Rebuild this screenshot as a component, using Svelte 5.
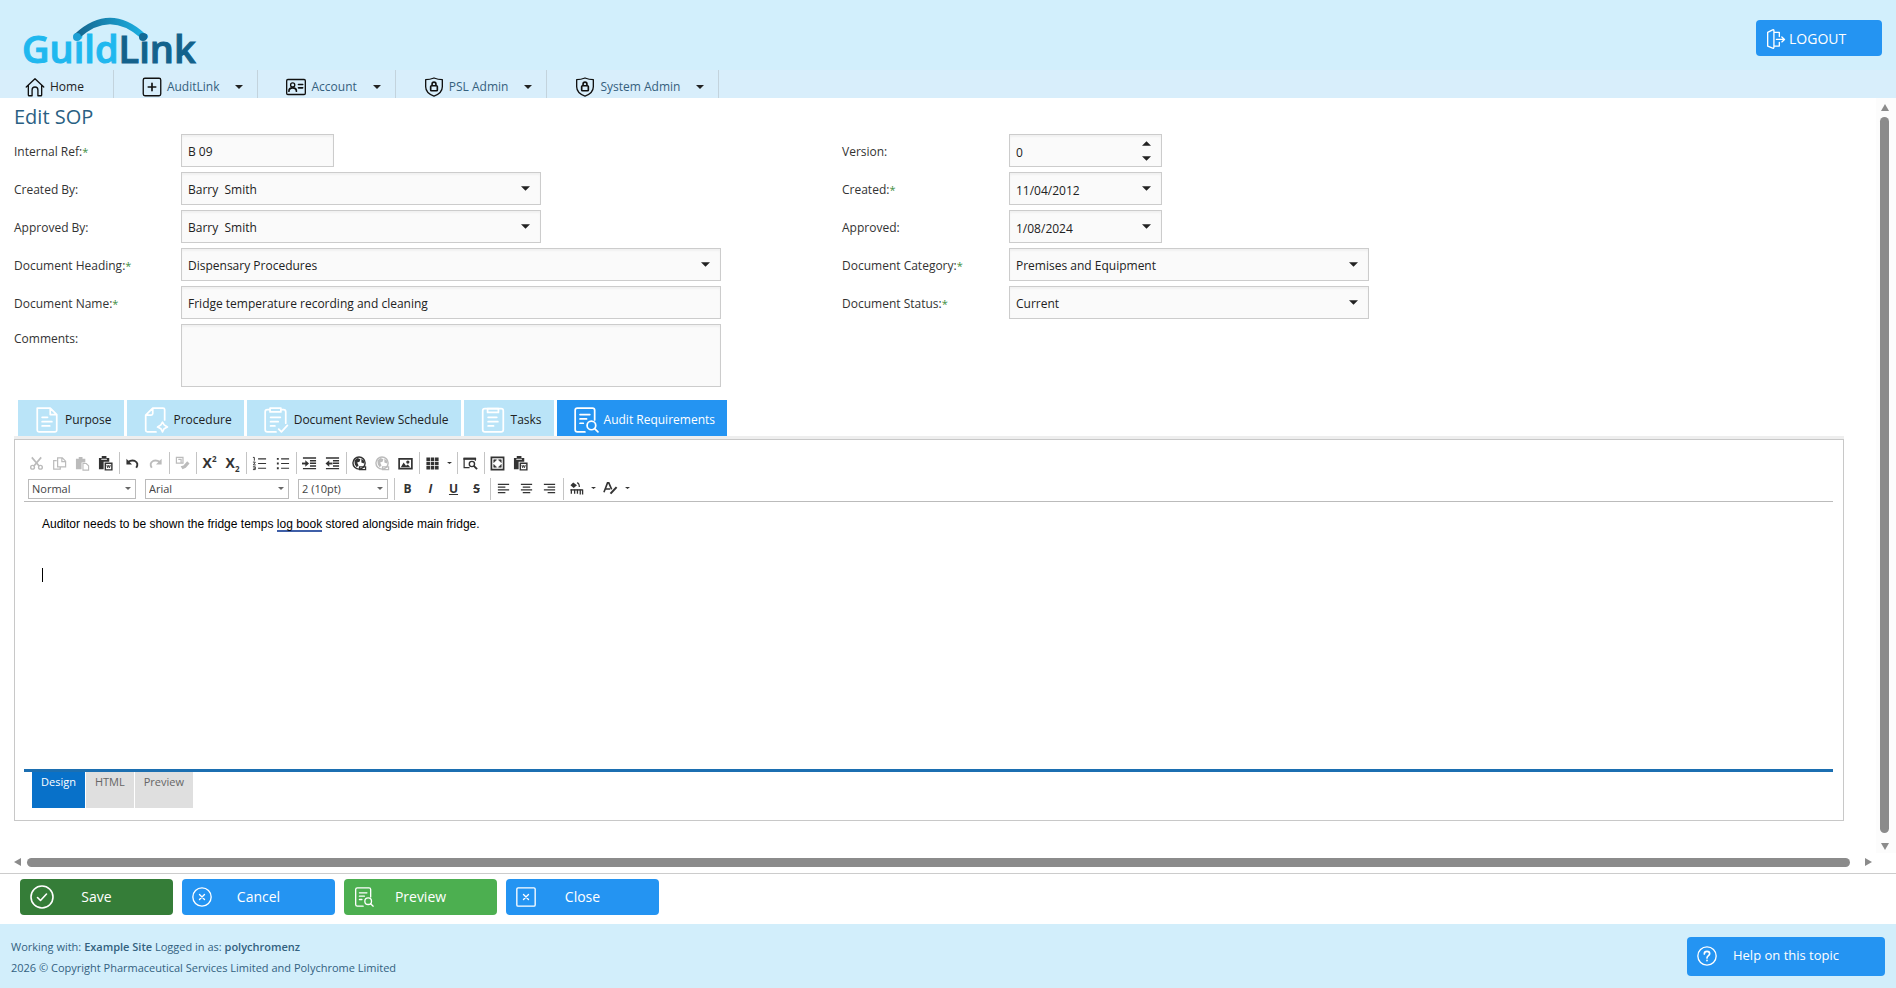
<script>
  const menu = [
    { name: 'AuditLink', icon: 'plus' },
    { name: 'Account', icon: 'card' },
    { name: 'PSL Admin', icon: 'shield' },
    { name: 'System Admin', icon: 'shield' }
  ];

  const tabs = [
    { name: 'Purpose', icon: 'doc' },
    { name: 'Procedure', icon: 'process' },
    { name: 'Document Review Schedule', icon: 'review' },
    { name: 'Tasks', icon: 'tasks' },
    { name: 'Audit Requirements', icon: 'audit' }
  ];
  let activeTab = $state('Audit Requirements');

  // groups are divided by a separator
  const tools = [
    ['cut', 'copy', 'paste', 'pasteWord'],
    ['undo', 'redo'],
    ['format'],
    ['sup', 'sub'],
    ['ol', 'ul'],
    ['indent', 'outdent'],
    ['link', 'unlink', 'image'],
    ['table', 'more'],
    ['find'],
    ['full', 'pasteWord']
  ];
  const disabled = ['cut', 'copy', 'paste', 'redo', 'format', 'unlink'];
  const styleTools = [
    ['bold', 'italic', 'underline', 'strike'],
    ['left', 'center', 'right'],
    ['back', 'more', 'fore', 'more']
  ];

  const views = ['Design', 'HTML', 'Preview'];
  let view = $state('Design');

  let version = $state(0);
  let internalRef = $state('B 09');
  let created = $state('11/04/2012');
  let approved = $state('1/08/2024');
  let documentName = $state('Fridge temperature recording and cleaning');
  let comments = $state('');
</script>

{#snippet arrow()}
  <svg class="arrow" width="9" height="5" viewBox="0 0 10 5" aria-hidden="true"><path d="M0 0h10L5 5z" fill="currentColor" /></svg>
{/snippet}

{#snippet combo(id, value, size)}
  <div class="combo {size}">
    <select {id}><option>{value}</option></select>
    {@render arrow()}
  </div>
{/snippet}

{#snippet lineIcon(name, size)}
  <svg class="icon" width={size} height={size} viewBox="0 0 24 24" fill="none" stroke="currentColor" stroke-width="1.6" stroke-linecap="round" stroke-linejoin="round" aria-hidden="true">
    {#if name === 'home'}
      <path d="M1.5 12 12 2l10.500 10M4 10v11.500q0 1 1 1h3.500v-7q0-3.500 3.500-3.500t3.500 3.500v7H19q1 0 1-1V10" />
    {:else if name === 'plus'}
      <rect x="1.500" y="1.500" width="21" height="21" rx="2" /><path d="M12 7.500v9M7.500 12h9" stroke-width="2" />
    {:else if name === 'card'}
      <rect x="0.800" y="3" width="22.400" height="18" rx="1.500" /><circle cx="8" cy="9.500" r="2.500" /><path d="M3.500 17q0-4 4.500-4t4.500 4M15 9h5M15 13h5" stroke-width="2" />
    {:else if name === 'shield'}
      <path d="M12 1.200q5 2 10 2v8.500q0 7.500-10 11.300Q2 19.200 2 11.700V3.200q5 0 10-2z" /><rect x="8" y="10.500" width="8" height="6" rx="1" stroke-width="2" /><path d="M9.700 10V8.500q0-2.300 2.300-2.300t2.300 2.300V10" stroke-width="2" />
    {:else if name === 'logout'}
      <path d="M2 4 8 1q1.500-.5 1.500 1v20q0 1.500-1.500 1L2 20.500zM9.500 4H16v5M9.500 20.500H16V16M12.500 12.500H22M19 9.500l3.200 3L19 15.500" />
    {:else if name === 'doc'}
      <path d="M3 1h12l6 6v14.500q0 1.500-1.500 1.500h-15Q3 23 3 21.500zM15 1v6h6M7.500 9.500h5M7.500 13.500h9M7.500 17.500h7" />
    {:else if name === 'process'}
      <path d="M12 23H4q-1.500 0-1.500-1.500V7.500L9 1h9.500Q20 1 20 2.500V12M9 1v5q0 1.500-1.500 1.500h-5M18 14l1.500 2.500L22.500 18.500l-3 1.500L18 23l-1.500-3-3-1.500 3-2z" />
    {:else if name === 'review'}
      <path d="M12 23H4q-2 0-2-2V4.500q0-2 2-2h2.500M16.500 2.500H19q2 0 2 2V15M6.500 1h10v3.500h-10zM7 9.500h9M7 13.500h7M7 17.500h4M14.500 20.500l2.500 2.500 5.500-6" />
    {:else if name === 'tasks'}
      <rect x="2.500" y="1.500" width="19" height="21.500" rx="2" /><path d="M7 1.500h10V5H7zM7.500 9.500h8M7.500 13.500h9M7.500 17.500h5" />
    {:else if name === 'audit'}
      <path d="M11 23H4q-2 0-2-2V3q0-2 2-2h14q2 0 2 2v9M6.500 7h9M6.500 11h6M6.500 15h3" /><circle cx="17" cy="17" r="4" /><path d="m20 20 3 3" />
    {:else if name === 'check'}
      <circle cx="12" cy="12" r="11" /><path d="m7.500 12.500 3 3 6-6.500" />
    {:else if name === 'cancel'}
      <circle cx="12" cy="12" r="11" /><path d="m9 9 6 6M15 9l-6 6" />
    {:else if name === 'close'}
      <rect x="1" y="1" width="22" height="22" rx="1.500" /><path d="m9 9 6 6M15 9l-6 6" />
    {:else if name === 'help'}
      <circle cx="12" cy="12" r="11" /><path d="M8.800 9.500q0-3 3.200-3t3.200 2.800c0 2.200-3.200 2.300-3.200 5M12 17.300v.4" stroke-width="2" />
    {/if}
  </svg>
{/snippet}

{#snippet toolIcon(name)}
  <svg width="15" height="15" viewBox="0 0 16 16" fill="none" stroke="currentColor" stroke-width="1.500" aria-hidden="true">
    {#if name === 'cut'}
      <path d="M3 1.500 11 11M13 1.500 5 11" stroke-width="1.800" /><circle cx="3.800" cy="12" r="2" /><circle cx="12.200" cy="12" r="2" />
    {:else if name === 'copy'}
      <path d="M5 5H1.800v9h7v-2.500M6 2h5l3.500 3.500v6H6zM10.500 2v4h4" stroke-width="1.300" />
    {:else if name === 'paste'}
      <path d="M1 3h3V1h4v2h3v4H7v7H1z" fill="currentColor" stroke="none" /><path d="M8.500 8h3.500l2.500 2.500V15h-6z" stroke-width="1.200" />
    {:else if name === 'pasteWord'}
      <path d="M1 2h3V0h5v2h3v4H6v8H1z" fill="currentColor" stroke="none" /><path d="M3.500 3.500h6" stroke="#fff" stroke-width="1" /><path d="M7.800 7.800h7v7h-7z" /><path d="m9.500 9.500.8 3 1-2.500 1 2.500.8-3" stroke-width="1" />
    {:else if name === 'undo'}
      <path d="M3 6.500Q7 4 10.500 5.300 15 7.500 12 12.500" stroke-width="2" /><path d="M1.500 3v6h6z" fill="currentColor" stroke="none" />
    {:else if name === 'redo'}
      <path d="M13 6.500Q9 4 5.500 5.300 1 7.500 4 12.500" stroke-width="2" /><path d="M14.500 3v6h-6z" fill="currentColor" stroke="none" />
    {:else if name === 'format'}
      <path d="M1.500 1.500h7v6h-7zM3.500 3.500h3v4" stroke-width="1.300" /><path d="M8 14l-2-3 3-1 4-4.500 2.500 2.500-4 4.500z" fill="currentColor" stroke="none" />
    {:else if name === 'ol'}
      <path d="M6.500 3H15M6.500 8H15M6.500 13H15" stroke-width="1.200" /><path d="M1 1.500h1.500V5M1 6.500h2.500L1.500 9.500h2.500M1 11.500h2.500v3H1M1.500 13h2" stroke-width="1" />
    {:else if name === 'ul'}
      <path d="M6.500 3H15M6.500 8H15M6.500 13H15" stroke-width="1.200" /><path d="M2 2h2v2H2zM2 7h2v2H2zM2 12h2v2H2z" fill="currentColor" stroke="none" />
    {:else if name === 'indent' || name === 'outdent'}
      <path d="M1 2.200h14M8.500 5h6.500M8.500 7.800h6.500M8.500 10.600h6.500M1 13.500h14" />
      <path d={name === 'indent' ? 'M0 8h5' : 'M3 8h5'} stroke-width="2" />
      <path d={name === 'indent' ? 'M3.500 4.500v7L7.500 8z' : 'M4.500 4.500v7L.5 8z'} fill="currentColor" stroke="none" />
    {:else if name === 'link' || name === 'unlink'}
      <circle cx="7.500" cy="7.500" r="6.500" /><path d="M2.500 4.500 6 2l3 1.500-1 2.500-2.500 1L7 10l-2 2-2-3zM10 3l3 2v3l-3-1z" fill="currentColor" stroke="none" /><path d="M8 11.500h6.500v3H8z" stroke-width="1.300" />
    {:else if name === 'image'}
      <path d="M1.200 3h13.600v10.500H1.200z" stroke-width="1.800" /><path d="M3 12l3-5 2.500 3.500L10.500 9l2.500 3z" fill="currentColor" stroke="none" /><circle cx="10.500" cy="6.500" r="1" fill="currentColor" />
    {:else if name === 'table'}
      <path d="M1.500 3.500h13M1.500 8h13M1.500 12.500h13" stroke-width="3.600" stroke-dasharray="3.800 0.800" />
    {:else if name === 'find'}
      <path d="M7 12.500H1.200v-10h12V5" stroke-width="1.300" /><path d="M.5 3h13.500" stroke-width="2.200" /><circle cx="9.500" cy="8.500" r="2.800" /><path d="m11.500 10.500 3.500 3.500" stroke-width="2" />
    {:else if name === 'full'}
      <path d="M1.500 1.500h13v13h-13z" stroke-width="1.800" /><path d="M4 7V4h3zM9 4h3v3zM4 9v3h3zM12 9v3H9z" fill="currentColor" stroke-width=".6" />
    {:else if name === 'left'}
      <path d="M2 3.500h12M2 6.500h8M2 9.500h12M2 12.500h8" stroke-width="1.300" />
    {:else if name === 'center'}
      <path d="M2 3.500h12M4 6.500h8M2 9.500h12M4 12.500h8" stroke-width="1.300" />
    {:else if name === 'right'}
      <path d="M2 3.500h12M6 6.500h8M2 9.500h12M6 12.500h8" stroke-width="1.300" />
    {:else if name === 'back'}
      <path d="M1.500 4.500 4.500 1.500l4 3-3.500 3z" fill="currentColor" stroke="none" /><path d="M8.500 2q2.500 0 2.500 4.500" stroke-width="1.300" /><path d="M1.500 9.500h13" stroke-width="1.500" /><path d="M2.500 9v4.500M6 9v4.500M9 9v4.500M12 9v5.500M14.500 9v5.500" stroke-width="1.400" />
    {:else if name === 'fore'}
      <path d="M1 12 4.800 2h1.400l3 7M3 8.500h4.500" stroke-width="1.700" /><path d="m8 13.500 6.500-7" stroke-width="2.200" />
    {/if}
  </svg>
{/snippet}

{#snippet tool(name)}
  {#if name === 'more'}
    <button type="button" class="tool more" aria-label="More options"><svg width="5" height="3" viewBox="0 0 5 3" aria-hidden="true"><path d="M0 0h5L2.500 2z" fill="currentColor" /></svg></button>
  {:else}
    <button type="button" class="tool" aria-label={name} disabled={disabled.includes(name)}>
      {#if name === 'bold'}<b>B</b>
      {:else if name === 'italic'}<b><i>I</i></b>
      {:else if name === 'underline'}<b><u>U</u></b>
      {:else if name === 'strike'}<b><s>S</s></b>
      {:else if name === 'sup'}<b class="script">X<sup>2</sup></b>
      {:else if name === 'sub'}<b class="script">X<sub>2</sub></b>
      {:else}{@render toolIcon(name)}{/if}
    </button>
  {/if}
{/snippet}

<div class="page">
  <header>
    <a class="logo" href="#home" aria-label="GuildLink">
      <svg width="190" height="66" viewBox="0 0 190 66">
        <defs>
          <linearGradient id="arc"><stop offset="0" stop-color="#15668f" /><stop offset="1" stop-color="#1cb0e2" /></linearGradient>
        </defs>
        <text x="0" y="59"><tspan class="guild">Guild</tspan><tspan class="link">Link</tspan></text>
        <path d="M55 32Q88 2 121 32" fill="none" stroke="url(#arc)" stroke-width="6" stroke-linecap="round" />
        <circle cx="55" cy="33" r="4" fill="#1c9fd4" />
        <circle cx="121" cy="33" r="4" fill="#136a95" />
      </svg>
    </a>
    <button type="button" class="btn logout">{@render lineIcon('logout', 20)}LOGOUT</button>
  </header>

  <nav>
    <a class="home" href="#home">{@render lineIcon('home', 20)}Home</a>
    {#each menu as item}
      <a href="#menu">{@render lineIcon(item.icon, 20)}{item.name}<svg class="caret" width="8" height="4" viewBox="0 0 8 4" aria-hidden="true"><path d="M0 0h8L4 4z" fill="#222" /></svg></a>
    {/each}
  </nav>

  <div class="scroll">
    <main>
      <h1>Edit SOP</h1>

      <form class="fields">
        <label for="ref">Internal Ref:<em>*</em></label>
        <div><input id="ref" class="box small" bind:value={internalRef} /></div>
        <label for="version">Version:</label>
        <div class="combo small">
          <input id="version" bind:value={version} />
          <div class="spin">
            <button type="button" class="up" aria-label="Increase" onclick={() => version++}>{@render arrow()}</button>
            <button type="button" aria-label="Decrease" onclick={() => version--}>{@render arrow()}</button>
          </div>
        </div>

        <label for="createdBy">Created By:</label>
        {@render combo('createdBy', 'Barry \u00a0Smith', 'medium')}
        <label for="created">Created:<em>*</em></label>
        <div class="combo small"><input id="created" bind:value={created} />{@render arrow()}</div>

        <label for="approvedBy">Approved By:</label>
        {@render combo('approvedBy', 'Barry \u00a0Smith', 'medium')}
        <label for="approved">Approved:</label>
        <div class="combo small"><input id="approved" bind:value={approved} />{@render arrow()}</div>

        <label for="heading">Document Heading:<em>*</em></label>
        {@render combo('heading', 'Dispensary Procedures', 'large')}
        <label for="category">Document Category:<em>*</em></label>
        {@render combo('category', 'Premises and Equipment', 'medium')}

        <label for="name">Document Name:<em>*</em></label>
        <div><input id="name" class="box large" bind:value={documentName} /></div>
        <label for="status">Document Status:<em>*</em></label>
        {@render combo('status', 'Current', 'medium')}

        <label for="comments" class="top">Comments:</label>
        <textarea id="comments" class="box large" bind:value={comments}></textarea>
      </form>

      <div class="tabs" role="tablist">
        {#each tabs as tab}
          <button type="button" role="tab" aria-selected={activeTab === tab.name} class:active={activeTab === tab.name} onclick={() => (activeTab = tab.name)}>
            {@render lineIcon(tab.icon, 26)}{tab.name}
          </button>
        {/each}
      </div>

      <section class="editor">
        <div class="toolbar">
          {#each tools as group, i}
            {#if i > 0}<span class="sep"></span>{/if}
            {#each group as name}{@render tool(name)}{/each}
          {/each}
        </div>
        <div class="toolbar styles">
          <div class="pick p1"><select aria-label="Paragraph"><option>Normal</option></select>{@render arrow()}</div>
          <div class="pick p2"><select aria-label="Font name"><option>Arial</option></select>{@render arrow()}</div>
          <div class="pick p3"><select aria-label="Font size"><option>2 (10pt)</option></select>{@render arrow()}</div>
          {#each styleTools as group}
            <span class="sep"></span>
            {#each group as name}{@render tool(name)}{/each}
          {/each}
        </div>
        <div class="document">
          <p>Auditor needs to be shown the fridge temps <span class="grammar">log book</span> stored alongside main fridge.</p>
          <p class="cursor"></p>
        </div>
        <div class="views">
          {#each views as name}
            <button type="button" class:active={view === name} onclick={() => (view = name)}>{name}</button>
          {/each}
        </div>
      </section>
    </main>

    <div class="vbar">
      <svg width="8" height="7" viewBox="0 0 8 7"><path d="M0 7 4 0l4 7z" fill="#8b8b8b" /></svg>
      <span></span>
      <svg width="8" height="7" viewBox="0 0 8 7"><path d="M0 0h8L4 7z" fill="#8b8b8b" /></svg>
    </div>
    <div class="hbar">
      <svg width="7" height="8" viewBox="0 0 7 8"><path d="M7 0v8L0 4z" fill="#8b8b8b" /></svg>
      <span></span>
      <svg width="7" height="8" viewBox="0 0 7 8"><path d="M0 0v8l7-4z" fill="#8b8b8b" /></svg>
    </div>
  </div>

  <div class="actions">
    <button type="button" class="btn save">{@render lineIcon('check', 24)}<span>Save</span></button>
    <button type="button" class="btn">{@render lineIcon('cancel', 20)}<span>Cancel</span></button>
    <button type="button" class="btn preview">{@render lineIcon('audit', 20)}<span>Preview</span></button>
    <button type="button" class="btn">{@render lineIcon('close', 20)}<span>Close</span></button>
  </div>

  <footer>
    <div>
      <p>Working with: <b>Example Site</b> Logged in as: <b>polychromenz</b></p>
      <p>2026 © Copyright Pharmaceutical Services Limited and Polychrome Limited</p>
    </div>
    <button type="button" class="btn help">{@render lineIcon('help', 20)}<span>Help on this topic</span></button>
  </footer>
</div>

<style>
  :global(body) { margin: 0; background: #fff; }
  .page { display: flex; flex-direction: column; min-height: 100vh; font: 12px/16px "Open Sans", "Noto Sans", sans-serif; color: #333; }
  button, input, select, textarea { font: inherit; color: inherit; margin: 0; box-sizing: border-box; }
  button { border: 0; padding: 0; background: none; cursor: pointer; }
  svg { display: block; flex: none; }

  header { display: flex; justify-content: space-between; align-items: center; height: 70px; padding: 0 14px 0 22px; background: #d2effc; }
  .logo { padding-top: 4px; }
  .logo svg { overflow: visible; }
  .logo text { font: 600 38px "Open Sans", sans-serif; }
  .guild { fill: #1fb8ef; stroke: #1fb8ef; }
  .link { fill: #12628c; stroke: #12628c; }
  .btn { height: 36px; width: 153px; border-radius: 4px; background: #2494f2; color: #fff; font-size: 14px; display: grid; align-items: center; }
  .btn > :global(*) { grid-area: 1 / 1; }
  .btn .icon { margin-left: 10px; }
  .logout { display: flex; width: 126px; gap: 3px; margin-top: 6px; padding-top: 2px; }

  nav { display: flex; height: 28px; background: #d8eefb; }
  nav a { display: flex; align-items: center; gap: 5px; padding: 6px 14px 0 28px; border-right: 1px solid #c3d3dd; color: #35607d; text-decoration: none; }
  nav a.home { padding: 6px 29px 0 25px; color: #222; }
  nav .icon { color: #111; }
  nav .caret { margin-left: 11px; }

  .scroll { flex: 1; display: grid; grid-template-columns: 1fr 20px; grid-template-rows: 1fr 20px; border-bottom: 1px solid #ccc; }
  main { display: flex; flex-direction: column; padding: 5px 32px 32px 14px; min-width: 0; }
  h1 { margin: 0; font-size: 20px; line-height: 28px; font-weight: 400; color: #2a5f83; }

  .fields { display: grid; grid-template-columns: 167px minmax(0, 661px) 167px minmax(0, 1fr); grid-auto-rows: minmax(33px, auto); row-gap: 5px; margin-top: 3px; align-items: center; }
  .fields label { padding-top: 2px; }
  .fields em { color: #3f8f3f; font-style: normal; font-size: 11px; }
  .fields label.top { align-self: start; padding-top: 7px; }
  .box, .combo { display: block; width: 100%; height: 33px; box-sizing: border-box; border: 1px solid #ccc; background: #fafafa; box-shadow: inset 0 2px 2px #f1f1f1; color: #222; }
  .box { padding: 2px 6px 0; }
  .combo { display: grid; grid-template: 31px / 1fr; align-items: center; }
  .combo > :global(*) { grid-area: 1 / 1; }
  .combo input, .combo select { width: 100%; height: 31px; border: 0; padding: 3px 6px 0; background: none; appearance: none; }
  .combo > .arrow { justify-self: end; margin-right: 10px; pointer-events: none; }
  .small { max-width: 153px; }
  .medium { max-width: 360px; }
  .large { max-width: 540px; }
  textarea.box { height: 63px; resize: none; }
  .spin { justify-self: end; display: flex; flex-direction: column; margin-right: 10px; }
  .spin button { height: 15px; display: grid; place-items: center; }
  .spin .up { transform: rotate(180deg); }

  .tabs { display: flex; gap: 3px; margin-top: 13px; padding-left: 4px; border-bottom: 3px solid #eee; }
  .tabs button { display: flex; align-items: center; gap: 5px; height: 36px; padding: 3px 12px 0 16px; background: #bae4f8; color: #222; }
  .tabs .icon { color: #fff; }
  .tabs button.active { background: #2494f2; color: #fff; }

  .editor { flex: 1; display: flex; flex-direction: column; border: 1px solid #c8c8c8; padding: 11px 10px 12px 9px; }
  .toolbar { display: flex; align-items: center; height: 24px; padding-left: 1px; color: #333; }
  .styles { height: 27px; padding: 1px 0 0 4px; box-sizing: border-box; border-bottom: 1px solid #bbb; margin-bottom: 1px; }
  .tool { width: 23px; height: 22px; display: grid; place-items: center; line-height: 16px; }
  .tool:disabled { color: #bbb; }
  .tool.more { width: 11px; }
  .sep { width: 1px; height: 22px; margin: 0 1px 0 2px; background: #c4c4c4; }
  .script { font-size: 14px; line-height: 16px; }
  .script sup, .script sub { font-size: 8px; line-height: 0; }
  .pick { display: grid; align-items: center; height: 20px; box-sizing: border-box; border: 1px solid #bbb; margin-right: 9px; }
  .pick > :global(*) { grid-area: 1 / 1; }
  .pick select { width: 100%; height: 18px; border: 0; padding: 0 3px; appearance: none; background: none; font-size: 11px; color: #444; }
  .pick .arrow { justify-self: end; width: 6px; height: 3px; margin-right: 4px; color: #666; pointer-events: none; }
  .p1 { width: 108px; }
  .p2 { width: 144px; }
  .p3 { width: 90px; margin-right: 4px; }

  .document { flex: 1; min-height: 200px; box-sizing: border-box; padding: 13px 18px; font: 12px/16px "Liberation Sans", Arial, sans-serif; color: #000; }
  .document p { margin: 0; }
  .grammar { border-bottom: 2px solid #3f5fa8; line-height: 12px; display: inline-block; height: 12px; }
  .document .cursor { width: 1px; height: 14px; margin-top: 36px; background: #000; }
  .views { display: flex; align-items: flex-start; gap: 1px; padding-left: 8px; border-top: 3px solid #1c6fb1; }
  .views button { height: 36px; padding: 0 9px 17px; background: #dfdfdf; color: #666; font-size: 11px; }
  .views button.active { background: #0871c9; color: #fff; }

  .vbar { display: flex; flex-direction: column; align-items: center; gap: 6px; padding: 6px 3px 3px 0; background: #fcfcfc; }
  .vbar span { flex: 1; width: 9px; margin-bottom: 4px; border-radius: 5px; background: #8b8b8b; }
  .hbar { display: flex; align-items: center; gap: 6px; padding: 0 4px 2px 14px; }
  .hbar span { flex: 1; height: 9px; margin-right: 9px; border-radius: 5px; background: #8b8b8b; }

  .actions { display: flex; gap: 9px; padding: 5px 20px 9px; }
  .save { background: #357d38; }
  .preview { background: #4caf50; }

  footer { display: flex; justify-content: space-between; align-items: center; height: 64px; box-sizing: border-box; padding: 0 11px; background: #d2eefb; color: #33617f; font-size: 11px; }
  footer p { margin: 5px 0; }
  footer div { padding-top: 2px; }
  footer b { font-weight: 600; }
  .help { width: 198px; height: 39px; font-size: 13px; }
  .help span { padding-bottom: 3px; }
</style>
